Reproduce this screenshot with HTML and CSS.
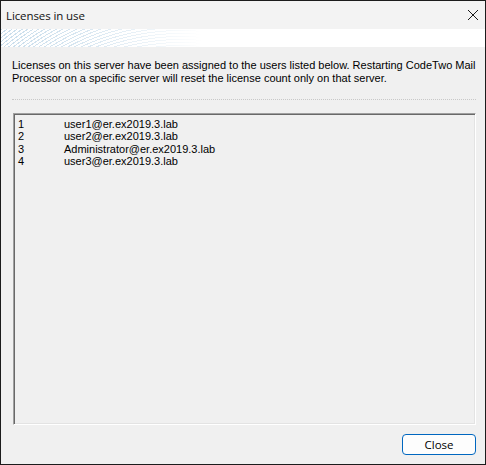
FILE: index.html
```html
<!DOCTYPE html>
<html lang="en">
<head>
    <meta charset="UTF-8">
    <title>Licenses in use</title>
    <link rel="stylesheet" href="styles.css">
</head>
<body>
    <div class="dialog">
        <div class="title-bar">
            <span class="title">Licenses in use</span>
            <svg class="close-x" width="12" height="12" viewBox="0 0 12 12">
                <path d="M1 1 L11 11 M11 1 L1 11" stroke="#1a1a1a" stroke-width="1" fill="none"/>
            </svg>
        </div>
        <div class="banner"></div>

        <div class="content">
            <p class="description">Licenses on this server have been assigned to the users listed below. Restarting CodeTwo Mail Processor on a specific server will reset the license count only on that server.</p>
            <div class="separator"></div>

            <div class="user-list">
                <div class="row"><span class="num">1</span><span>user1@er.ex2019.3.lab</span></div>
                <div class="row"><span class="num">2</span><span>user2@er.ex2019.3.lab</span></div>
                <div class="row"><span class="num">3</span><span>Administrator@er.ex2019.3.lab</span></div>
                <div class="row"><span class="num">4</span><span>user3@er.ex2019.3.lab</span></div>
            </div>

            <div class="footer">
                <button class="btn">Close</button>
            </div>
        </div>
    </div>
</body>
</html>
```

FILE: styles.css
```css
html, body {
    margin: 0;
    padding: 0;
}
body {
    background: #f0f0f0;
    font-family: "Liberation Sans", Arial, sans-serif;
}
.dialog {
    box-sizing: border-box;
    width: 486px;
    height: 465px;
    border: 1px solid #1c1c1c;
    background: #f0f0f0;
    display: flex;
    flex-direction: column;
}
.title-bar {
    height: 28px;
    background: #f3f3f3;
    display: flex;
    align-items: center;
    justify-content: space-between;
    padding: 0 6px 0 5px;
}
.title {
    font-family: "Open Sans", sans-serif;
    font-size: 11.5px;
    color: #111;
    letter-spacing: -0.1px;
}
.banner {
    height: 18px;
    background-color: #fff;
    background-image: repeating-radial-gradient(circle at 180px 229px, transparent 0 2px, #cadeec 2px 3px);
    position: relative;
}
.banner::after {
    content: "";
    position: absolute;
    inset: 0;
    background: linear-gradient(to right, rgba(255,255,255,0) 0, rgba(255,255,255,0.3) 90px, #fff 200px);
}
.content {
    flex: 1;
    display: flex;
    flex-direction: column;
    padding: 0 9px 9px 10px;
}
.description {
    margin: 12px 0 0 1px;
    font-size: 11px;
    line-height: 13px;
    color: #000;
}
.separator {
    margin: 14px 0 0 1px;
    border-top: 1px dotted #c8c8c8;
}
.user-list {
    flex: 1;
    margin: 13px 0 0 2px;
    border: 1px solid;
    border-color: #a0a0a0 #fff #fff #a0a0a0;
    box-shadow: inset 1px 1px 0 #696969, inset -1px -1px 0 #e3e3e3;
    background: #f0f0f0;
    padding: 4px 4px;
    font-size: 11px;
    color: #000;
}
.row {
    display: flex;
    line-height: 12.4px;
}
.num {
    width: 46px;
}
.footer {
    display: flex;
    justify-content: flex-end;
    padding-top: 9px;
}
.btn {
    width: 74px;
    height: 21px;
    border: 1px solid #0067c0;
    border-radius: 4px;
    background: #fdfdfd;
    font-family: "Open Sans", sans-serif;
    font-size: 11.5px;
    color: #000;
    padding: 0;
}
```
